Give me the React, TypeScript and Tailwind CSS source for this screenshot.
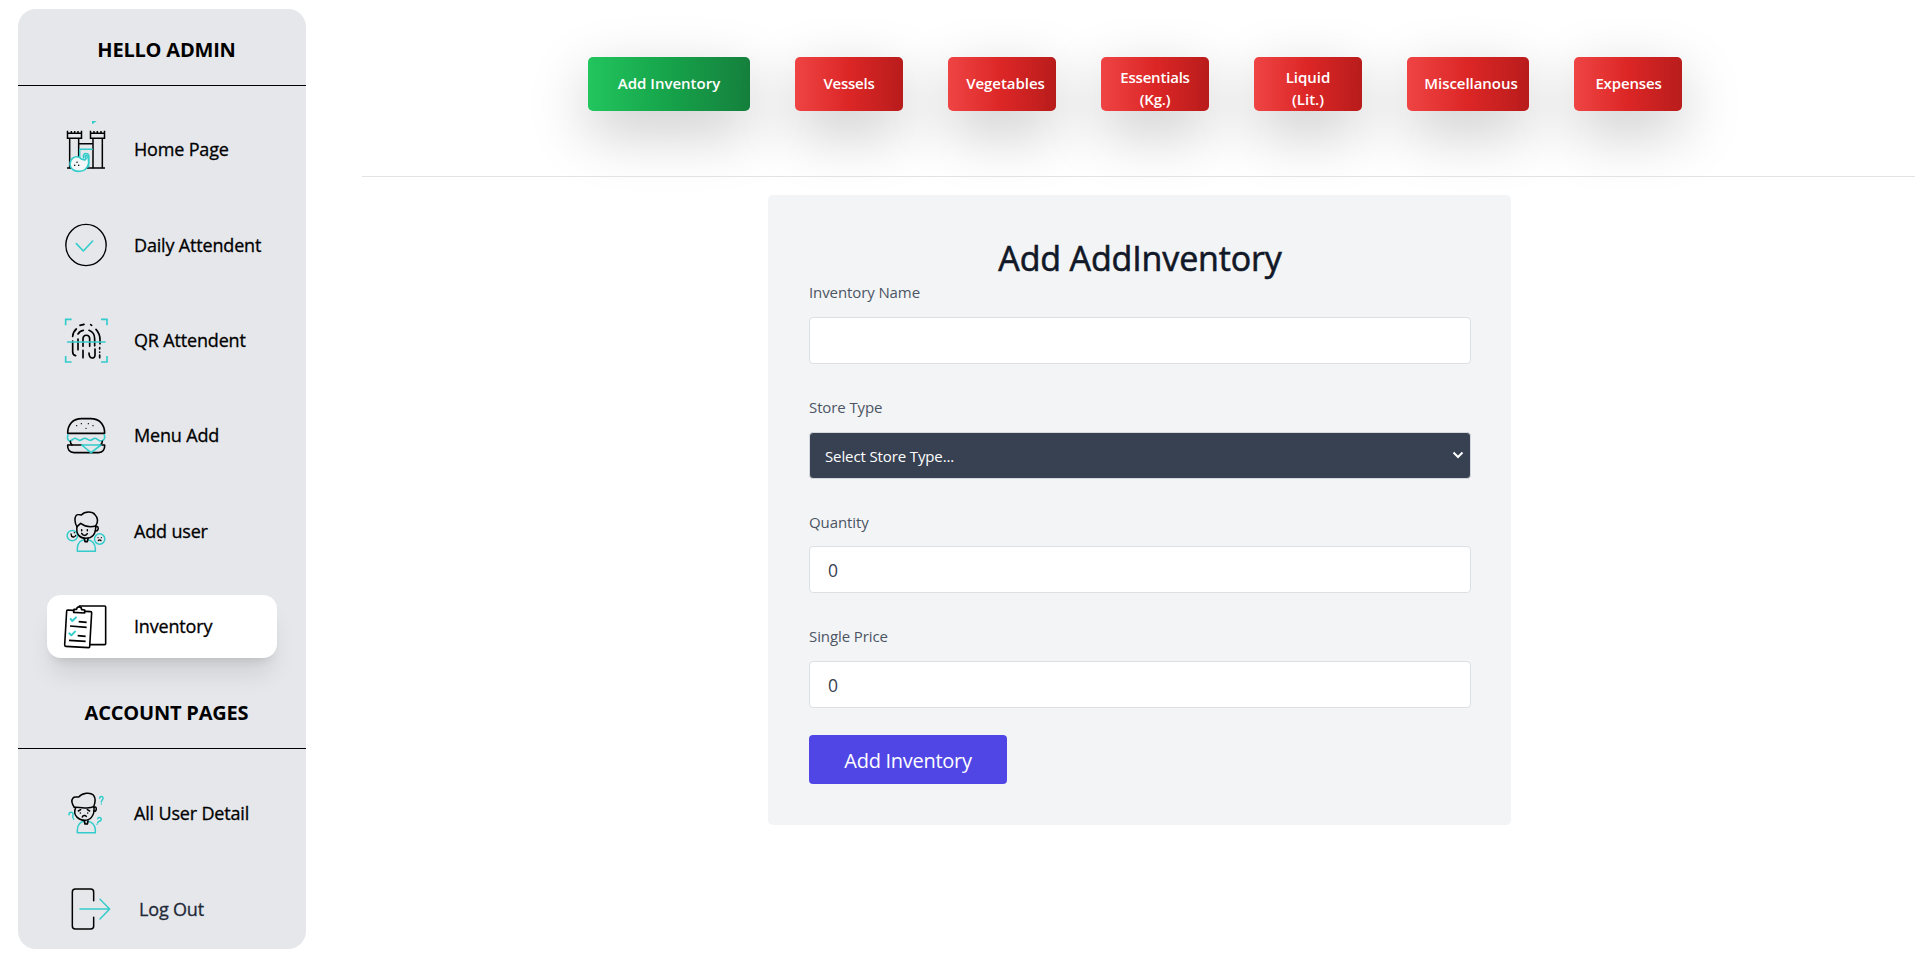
import React from "react";

const TEAL = "#34cccb";

function Icon({ children, sw = 4.5 }: { children: React.ReactNode; sw?: number }) {
  return (
    <svg
      viewBox="0 0 144 189"
      className="h-[63px] w-12 shrink-0 overflow-visible"
      fill="none"
      stroke="#000"
      strokeWidth={sw}
      strokeLinecap="round"
      strokeLinejoin="round"
    >
      {children}
    </svg>
  );
}

const CastleIcon = () => (
  <Icon>
    <path d="M19.500 38V60.500H61.500V38M19.500 46H61.500M31 39V46M41 39V46M51 39V46" strokeWidth={4.5} strokeLinecap="butt" strokeLinejoin="miter" />
    <path d="M88.500 38V60.500H130.500V38M88.500 46H130.500M99 39V46M109 39V46M120 39V46" strokeWidth={4.5} strokeLinecap="butt" strokeLinejoin="miter" />
    <path d="M26 62V149M53 62V149M96 62V149M124 62V149M53 77H96" strokeWidth={4.5} />
    <path d="M18 150H132" strokeWidth={5} strokeLinecap="butt" />
    <path d="M56 94H94" stroke={TEAL} />
    <path d="M56 96V118M68 120C64 108 72 105 78 107C84 109 85 116 83 124V146" stroke={TEAL} />
    <path d="M55 118C40 112 27 124 27 139C27 151 38 160 53 160C69 160 80 150 83 136C84 124 80 112 75 112C71 113 72 118 75 120C76 128 62 127 55 118Z" fill="#f4f7f8" stroke={TEAL} strokeWidth={5} />
    <path d="M48 133h.1M41 142h.1M53 142h.1" strokeWidth={4.5} />
    <path d="M93 9H107L96 17H93Z" fill={TEAL} stroke="none" />
  </Icon>
);

const CheckIcon = () => (
  <Icon sw={4.2}>
    <ellipse cx="75" cy="93" rx="60.5" ry="62" />
    <path d="M46 89L67 111L95 81" stroke={TEAL} strokeWidth={4.8} />
  </Icon>
);

const FingerprintIcon = () => (
  <Icon>
    <path d="M14 49V31H32M120 31H138V49M138 141V159H120M32 159H14V141" stroke={TEAL} strokeWidth={5} strokeLinecap="butt" strokeLinejoin="miter" />
    <g strokeWidth={5}>
      <path d="M35 82C36 72 40 65 46 60M57 49L69 46M89 47L92 49M105 61C113 70 117 80 117 92V104M35 96V128C35 134 39 139 44 140" />
      <path d="M51 75C55 68 60 65 67 64M84 64C95 68 101 77 101 89V110M51 90V122" />
      <path d="M66 112V90C66 75 86 75 86 90V112M66 124V146M84 132C84 151 102 151 102 138V120M116 116V120M116 129V130M116 138V146" />
    </g>
    <path d="M20 99H132" stroke={TEAL} strokeWidth={5} />
  </Icon>
);

const BurgerIcon = () => (
  <Icon sw={4.8}>
    <path d="M20 88C20 61 36 44 62 44H89C115 44 131 61 131 88Z" />
    <path d="M47 65h.1M61 59h.1M82 59h.1M96 65h.1M75 73h.1" strokeWidth={4} />
    <path d="M21 92C18 101 19 109 26 111C33 112 36 102 43 103C49 104 50 109 56 109C63 109 66 102 73 103C80 104 81 109 87 109C94 109 97 102 103 103C110 104 112 112 121 111C132 109 132 100 130 92" stroke={TEAL} />
    <path d="M28 112C28 118 30 121 33 123M124 112C124 118 121 121 118 123" />
    <path d="M62 123H20C19 137 26 146 39 146H113C125 146 132 137 131 123H120" />
    <path d="M62 123H120L90 146Z" stroke={TEAL} />
  </Icon>
);

const AddUserIcon = () => (
  <Icon>
    <path d="M49 154V146C49 129 60 119 71 119M80 119C93 120 103 131 103 146V154H49" stroke={TEAL} />
    <circle cx="34" cy="107" r="15.5" stroke={TEAL} />
    <circle cx="116" cy="117" r="15.5" stroke={TEAL} />
    <path d="M31 104C31 113 42 113 44 106M30 102h.1M40 98h.1" strokeWidth={4} />
    <path d="M111 113h.1M121 113h.1M112 122C114 119 118 119 120 122" strokeWidth={3.8} />
    <path d="M48 80C41 70 40 54 45 47C49 41 57 45 61 45C72 33 94 34 102 44C112 54 110 68 104 78" />
    <path d="M48 80L59 70C72 80 90 82 104 78" />
    <path d="M48 80C44 105 58 115 75 115C92 115 105 105 104 78" />
    <path d="M104 81C111 77 113 83 111 89C109 93 105 93 103 92" />
    <path d="M70 116L72 125H79L81 116" strokeWidth={5} />
    <path d="M62 89V92M79 89V92M62 100C66 108 75 108 79 101" />
  </Icon>
);

const ConfusedUserIcon = () => (
  <Icon>
    <path d="M49 152V145C49 127 60 118 71 118M80 118C93 119 103 130 103 145V152H49" stroke={TEAL} />
    <g stroke={TEAL}>
      <path d="M116 49C116 42 127 42 126 49C126 55 121 53 121 60M121 66h.1" />
      <path d="M24 98C24 88 36 89 36 97C36 103 34 103 36 108M38 112h.1" />
      <path d="M110 110C114 104 123 107 120 114C117 119 112 116 110 122M108 127h.1" />
    </g>
    <path d="M40 76C33 66 31 54 36 48C40 42 48 46 53 45C64 32 88 30 97 39C105 49 103 62 98 74" />
    <path d="M40 76C60 74 82 83 98 74" />
    <path d="M44 77C33 102 56 115 72 115C88 115 101 100 99 77" />
    <path d="M99 76C106 73 107 79 105 85C104 88 101 89 98 87" />
    <path d="M70 117L72 126H79L81 117" strokeWidth={5} />
    <path d="M52 87L59 83M79 83L86 87M58 93h.1M80 93h.1M64 105C66 99 73 99 76 103" strokeWidth={4.5} />
  </Icon>
);

const ClipboardIcon = () => (
  <Icon sw={4.8}>
    <path d="M55 33H131Q134 33 134 36V146Q134 149 131 149H88" />
    <path d="M37 46L20 45Q17 45 17 48L11 150Q11 154 14 154L83 158Q86 158 86 155L92 53Q92 50 89 50L73 49" />
    <path d="M39 43L47 43C47 33 62 33 62 44L71 45V54L38 52Z" strokeWidth={5} />
    <path d="M29 72L34 78L45 67M25 115L31 121L42 110" stroke={TEAL} strokeWidth={6} />
    <path d="M53 80L77 82M27 93L77 97M50 122L74 124M24 136L74 139" strokeLinecap="butt" />
  </Icon>
);

const LogoutIcon = () => (
  <Icon>
    <path d="M98 68V42Q98 33 89 33H43Q34 33 34 42V144Q34 153 43 153H89Q98 153 98 144V118" />
    <path d="M57 93H145M117 64L146 93L117 123" stroke={TEAL} />
  </Icon>
);

function NavItem({ icon, label, active, textClass = "" }: { icon: React.ReactNode; label: string; active?: boolean; textClass?: string }) {
  return (
    <a
      className={
        "mx-[29px] flex h-[63.4px] items-center gap-[25px] pl-[14px] text-[18px] leading-7 font-medium tracking-[-0.17px] [-webkit-text-stroke:0.3px] " +
        (active ? "rounded-[14px] bg-white shadow-[0_20px_25px_-5px_rgba(0,0,0,0.1),0_8px_10px_-6px_rgba(0,0,0,0.1)]" : "")
      }
    >
      {icon}
      <span className={"pb-px whitespace-nowrap " + textClass}>{label}</span>
    </a>
  );
}

function SectionHeading({ label, className }: { label: string; className: string }) {
  return (
    <h2
      className={
        "flex items-end justify-center border-b border-black pb-[21px] pl-[9px] text-[20px] leading-7 font-bold tracking-[-0.2px] " +
        className
      }
    >
      {label}
    </h2>
  );
}

function Tab({ label, className, green }: { label: string; className: string; green?: boolean }) {
  return (
    <button
      className={
        "flex h-[54px] items-center justify-center rounded-[5px] text-center text-[15px] leading-[22px] font-semibold text-white shadow-[0_20px_60px_rgba(0,0,0,0.22)] " +
        (green
          ? "bg-[linear-gradient(to_right,#22c55e,#16a34a,#15803d)] "
          : "bg-[linear-gradient(to_right,#ef4444,#dc2626,#b91c1c)] ") +
        className
      }
    >
      {label}
    </button>
  );
}

function Field({ label, className = "h-[114.7px]", children }: { label: string; className?: string; children: React.ReactNode }) {
  return (
    <div className={"flex flex-col " + className}>
      <label className="mb-[12.600px] h-[24px] text-[15px] leading-[24px] tracking-[-0.1px] text-[#4b5563]">{label}</label>
      {children}
    </div>
  );
}

const inputClass =
  "h-[47px] w-full shrink-0 rounded-[4px] border border-[#dcdfe4] bg-white px-[18px] text-[17.5px] text-[#374151] outline-none";

export default function App() {
  return (
    <div className="flex h-[958px] w-full overflow-hidden bg-white font-['Open_Sans','Noto_Sans',sans-serif] text-black">
      <aside className="mt-[9px] ml-[18px] h-[940px] w-[288px] shrink-0 rounded-[18px] bg-[#e5e7eb]">
        <SectionHeading label="HELLO ADMIN" className="h-[77px]" />
        <nav className="flex flex-col gap-8 pt-8">
          <NavItem icon={<CastleIcon />} label="Home Page" />
          <NavItem icon={<CheckIcon />} label="Daily Attendent" />
          <NavItem icon={<FingerprintIcon />} label="QR Attendent" />
          <NavItem icon={<BurgerIcon />} label="Menu Add" />
          <NavItem icon={<AddUserIcon />} label="Add user" />
          <NavItem icon={<ClipboardIcon />} label="Inventory" active />
        </nav>
        <SectionHeading label="ACCOUNT PAGES" className="h-[90.6px]" />
        <nav className="flex flex-col gap-8 pt-[33px]">
          <NavItem icon={<ConfusedUserIcon />} label="All User Detail" />
          <NavItem icon={<LogoutIcon />} label="Log Out" textClass="pl-[5px] text-[#1f2937]" />
        </nav>
      </aside>

      <main className="mr-[5px] ml-14 flex flex-1 flex-col">
        <div className="flex h-[176px] items-start gap-[45px] pt-[57px] pl-[226px]">
          <Tab green label="Add Inventory" className="w-[162px] pb-[2px]" />
          <Tab label="Vessels" className="w-[108px] pb-[2px] tracking-[-0.25px]" />
          <Tab label="Vegetables" className="w-[108px] pb-[2px] pl-[7px] tracking-[-0.05px]" />
          <Tab label="Essentials (Kg.)" className="w-[108px] px-4 pt-[7px] tracking-[-0.2px]" />
          <Tab label="Liquid (Lit.)" className="w-[108px] px-7 pt-[7px]" />
          <Tab label="Miscellanous" className="w-[122px] pb-[2px] pl-[6px] tracking-[-0.05px]" />
          <Tab label="Expenses" className="w-[108px] pb-[2px] pl-px tracking-[-0.15px]" />
        </div>
        <hr className="border-[#e2e3e5]" />

        <section className="mt-[18px] ml-[406px] h-[630px] w-[743px] rounded-[5px] bg-[#f3f4f6] pt-[39px] pr-10 pl-[41px]">
          <h1 className="h-[46.400px] pt-px text-center text-[34px] leading-[46px] font-medium tracking-[-0.15px] text-[#111827] [-webkit-text-stroke:0.6px]">
            Add AddInventory
          </h1>
          <form>
            <Field label="Inventory Name">
              <input className={inputClass} />
            </Field>
            <Field label="Store Type">
              <div className="flex h-[47px] shrink-0 items-center justify-between rounded-[4px] border border-[#d5d8dd] bg-[#374151] pr-[6px] pl-[15px] text-[15px] tracking-[-0.12px] text-white">
                <span className="pt-[2px]">Select Store Type...</span>
                <svg viewBox="0 0 12 8" className="h-2 w-3" fill="none" stroke="#fff" strokeWidth="2">
                  <path d="M1.5 1.5L6 6L10.500 1.500" />
                </svg>
              </div>
            </Field>
            <Field label="Quantity">
              <input className={inputClass} defaultValue="0" />
            </Field>
            <Field label="Single Price" className="h-[110.500px]">
              <input className={inputClass} defaultValue="0" />
            </Field>
            <button
              className="flex h-[49px] w-[198px] items-center justify-center rounded-[4px] bg-[#4f46e5] pt-[3px] text-[20px] leading-7 tracking-[-0.28px] text-white"
              type="button"
            >
              Add Inventory
            </button>
          </form>
        </section>
      </main>
    </div>
  );
}
